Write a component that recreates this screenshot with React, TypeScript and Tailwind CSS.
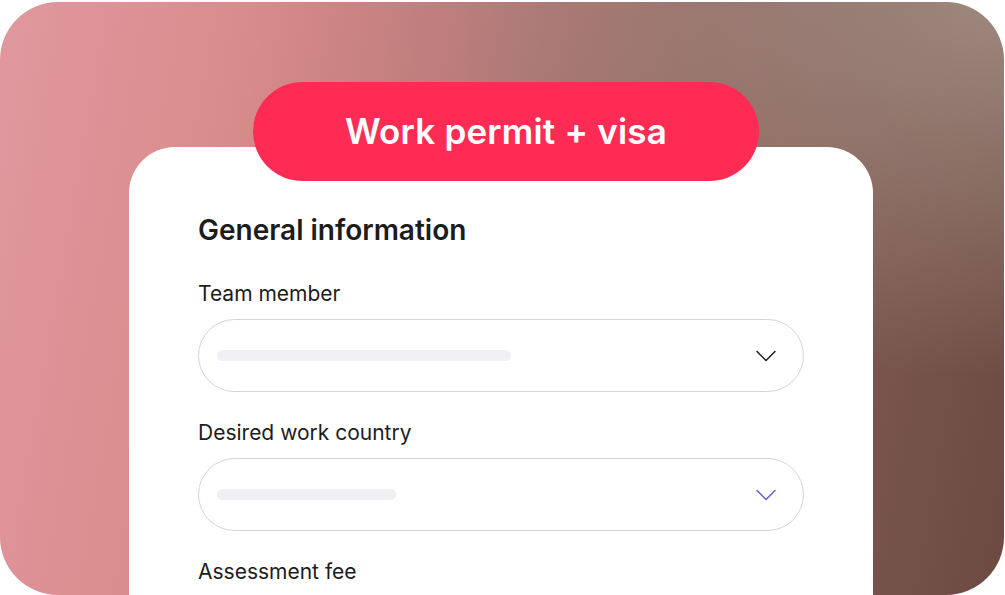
import { ChevronDown } from "lucide-react";

const fields = [
    { label: "Team member", bar: "w-[294px]", chevron: "text-[#222222]" },
    { label: "Desired work country", bar: "w-[179px]", chevron: "text-[#6b5bd6]" },
];

function SelectField({ label, bar, chevron }: { label: string; bar: string; chevron: string }) {
    return (
        <div className="flex flex-col">
            <label className="text-[21px] leading-[26px] text-[#1c1c1c] mb-[12px]">{label}</label>
            <div className="h-[73px] rounded-full border-[1.5px] border-[#d4d4d4] flex items-center justify-between pl-[18px] pr-[19px] mb-[28px]">
                <div className={`h-[11px] rounded-full bg-[#eef0f3] ${bar}`} />
                <ChevronDown className={`w-[36px] h-[36px] ${chevron}`} strokeWidth={1.05} />
            </div>
        </div>
    );
}

export default function App() {
    return (
        <div className="w-[1005px] h-[595px] bg-white pt-[2px] overflow-hidden font-['Inter',sans-serif]">
            <div className="relative h-[593px] w-[1004px] rounded-[58px] overflow-hidden bg-[radial-gradient(ellipse_at_top_right,rgba(165,145,135,0.85),rgba(165,145,135,0)_45%),linear-gradient(100deg,#e0989f_0%,#d98c8c_22%,#bd7b7a_42%,#946560_62%,#7d5850_80%,#6c4a41_100%)] pt-[80px]">
                {/* Title pill */}
                <div className="relative z-10 ml-[253px] w-[506px] h-[99px] rounded-[50px] bg-[#fe2c55] flex items-center justify-center">
                    <span className="text-white text-[35px] font-semibold tracking-[0.2px]">Work permit + visa</span>
                </div>

                {/* Form card */}
                <div className="-mt-[34px] ml-[129px] w-[744px] h-[500px] bg-white rounded-[46px] px-[69px] pt-[67px]">
                    <h2 className="text-[28px] leading-[32px] font-semibold text-[#1c1c1c] mb-[35px]">General information</h2>
                    {fields.map((f) => (
                        <SelectField key={f.label} {...f} />
                    ))}
                    <label className="text-[21px] leading-[26px] text-[#1c1c1c]">Assessment fee</label>
                </div>
            </div>
        </div>
    );
}
